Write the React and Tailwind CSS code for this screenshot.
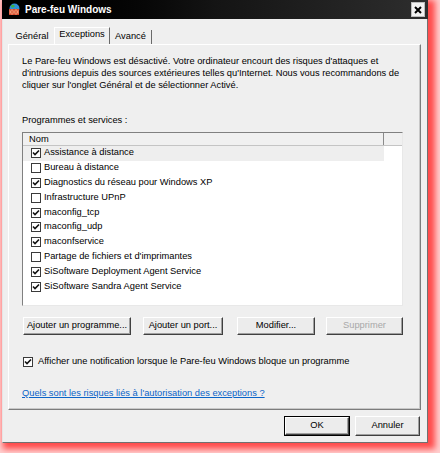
import React from 'react';

const rows = [
  ['Assistance à distance', true],
  ['Bureau à distance', false],
  ['Diagnostics du réseau pour Windows XP', true],
  ['Infrastructure UPnP', false],
  ['maconfig_tcp', true],
  ['maconfig_udp', true],
  ['maconfservice', true],
  ["Partage de fichiers et d'imprimantes", false],
  ['SiSoftware Deployment Agent Service', true],
  ['SiSoftware Sandra Agent Service', true],
];

function Check({ on }) {
  return (
    <span className="w-[10px] h-[10px] shrink-0 border border-[#3a3a3a] bg-white flex items-center justify-center">
      {on && (
        <svg width="8" height="8" viewBox="0 0 8 8">
          <path d="M1 3.5 L3 5.5 L7 1.5" stroke="#111" strokeWidth="1.6" fill="none" />
        </svg>
      )}
    </span>
  );
}

function Btn({ children, className = '', disabled }) {
  return (
    <div
      className={`flex items-center justify-center bg-[#ececec] border border-t-white border-l-white border-r-[#404040] border-b-[#404040] shadow-[inset_-1px_-1px_0_#a0a0a0] ${
        disabled ? 'text-[#a8a8a8]' : 'text-black'
      } ${className}`}
    >
      {children}
    </div>
  );
}

function FirewallIcon() {
  return (
    <svg width="13" height="13" viewBox="0 0 13 13">
      <circle cx="6.5" cy="5.5" r="5" fill="#2f8fd8" />
      <path d="M3 2.5 Q5 1 7 3 Q6 5 3.5 4.5 Z" fill="#3cb043" />
      <path d="M8 5 Q10 6 9.5 8 L8 7 Z" fill="#3cb043" />
      <rect x="1" y="6" width="10" height="6" fill="#d8472b" />
      <path d="M1 8 H11 M1 10 H11 M4 6 V8 M8 6 V8 M2.5 8 V10 M6 8 V10 M9.5 8 V10 M4 10 V12 M8 10 V12" stroke="#f3b38a" strokeWidth="0.7" />
    </svg>
  );
}

export default function App() {
  return (
    <div className="w-[440px] h-[453px] overflow-hidden bg-[#ffd0d0] font-['Liberation_Sans',Arial,sans-serif] text-[9.3px] text-black">
      <div className="ml-[2px] w-[426px] h-[443px] flex flex-col bg-[#efefef] border-l border-l-[#e6e6e6] border-r border-r-[#707070] border-b border-b-[#707070] shadow-[4px_3px_6px_3px_rgba(255,60,60,0.9)]">
        {/* title bar */}
        <div className="h-[19px] -ml-px -mr-px flex items-center bg-gradient-to-r from-[#000] via-[#141414] to-[#2e2e2e]">
          <div className="ml-[5px] w-[14px] flex items-center justify-center">
            <FirewallIcon />
          </div>
          <span className="ml-[4px] text-white font-bold text-[10px]">Pare-feu Windows</span>
          <div className="ml-auto mr-[3px] w-[14px] h-[15px] bg-[#f2f2f2] border border-[#bdbdbd] flex items-center justify-center">
            <svg width="8" height="8" viewBox="0 0 8 8">
              <path d="M1 1 L7 7 M7 1 L1 7" stroke="#000" strokeWidth="2" />
            </svg>
          </div>
        </div>

        {/* tabs */}
        <div className="mt-[8px] ml-[7px] h-[17px] flex items-end">
          <div className="w-[44px] h-[14px] flex items-center justify-center">Général</div>
          <div className="w-[56px] h-[17px] flex items-center justify-center pb-[2px] border-l border-l-white border-t border-t-white border-r border-r-[#6a6a6a] bg-[#efefef]">
            Exceptions
          </div>
          <div className="w-[42px] h-[14px] flex items-center justify-center border-r border-r-[#6a6a6a]">Avancé</div>
        </div>

        {/* panel */}
        <div className="ml-[5px] w-[413px] h-[366px] border border-t-white border-l-white border-r-[#7c7c7c] border-b-[#7c7c7c] shadow-[inset_-1px_-1px_0_#c8c8c8] pl-[13px]">
          <p className="mt-[11px] h-[58px] leading-[11.8px]">
            Le Pare-feu Windows est désactivé. Votre ordinateur encourt des risques d'attaques et
            <br />
            d'intrusions depuis des sources extérieures telles qu'Internet. Nous vous recommandons de
            <br />
            cliquer sur l'onglet Général et de sélectionner Activé.
          </p>
          <div className="h-[12px] leading-[12px]">Programmes et services :</div>

          {/* list */}
          <div className="mt-[6px] w-[381px] h-[174px] bg-white border border-t-[#808080] border-l-[#808080] border-r-[#e8e8e8] border-b-[#e8e8e8]">
            <div className="h-[13px] flex bg-[#f0f0f0] border-b border-b-[#c4c4c4]">
              <div className="w-[361px] pl-[6px] leading-[12px] border-r border-r-[#8a8a8a]">Nom</div>
            </div>
            {rows.map(([label, on], i) => (
              <div
                key={label}
                className={`h-[14.8px] w-[361px] pl-[8px] flex items-center gap-[3px] ${i === 0 ? 'bg-[#eeeeee]' : ''}`}
              >
                <Check on={on} />
                <span>{label}</span>
              </div>
            ))}
          </div>

          {/* action buttons */}
          <div className="mt-[11px] h-[18px] flex">
            <Btn className="ml-px w-[108px]">Ajouter un programme...</Btn>
            <Btn className="ml-[12px] w-[80px]">Ajouter un port...</Btn>
            <Btn className="ml-[14px] w-[78px]">Modifier...</Btn>
            <Btn className="ml-[11px] w-[77px]" disabled>Supprimer</Btn>
          </div>

          <div className="mt-[21px] h-[12px] flex items-center gap-[5px] pl-px">
            <Check on />
            <span>Afficher une notification lorsque le Pare-feu Windows bloque un programme</span>
          </div>

          <div className="mt-[19px] h-[12px] leading-[12px] text-[#0a64c8] underline">
            Quels sont les risques liés à l'autorisation des exceptions ?
          </div>
        </div>

        {/* dialog buttons */}
        <div className="mt-[6px] h-[20px] flex">
          <div className="ml-[281px] w-[66px] h-[20px] border border-black flex">
            <Btn className="flex-1">OK</Btn>
          </div>
          <Btn className="ml-[5px] w-[65px] h-[20px]">Annuler</Btn>
        </div>
      </div>
    </div>
  );
}
